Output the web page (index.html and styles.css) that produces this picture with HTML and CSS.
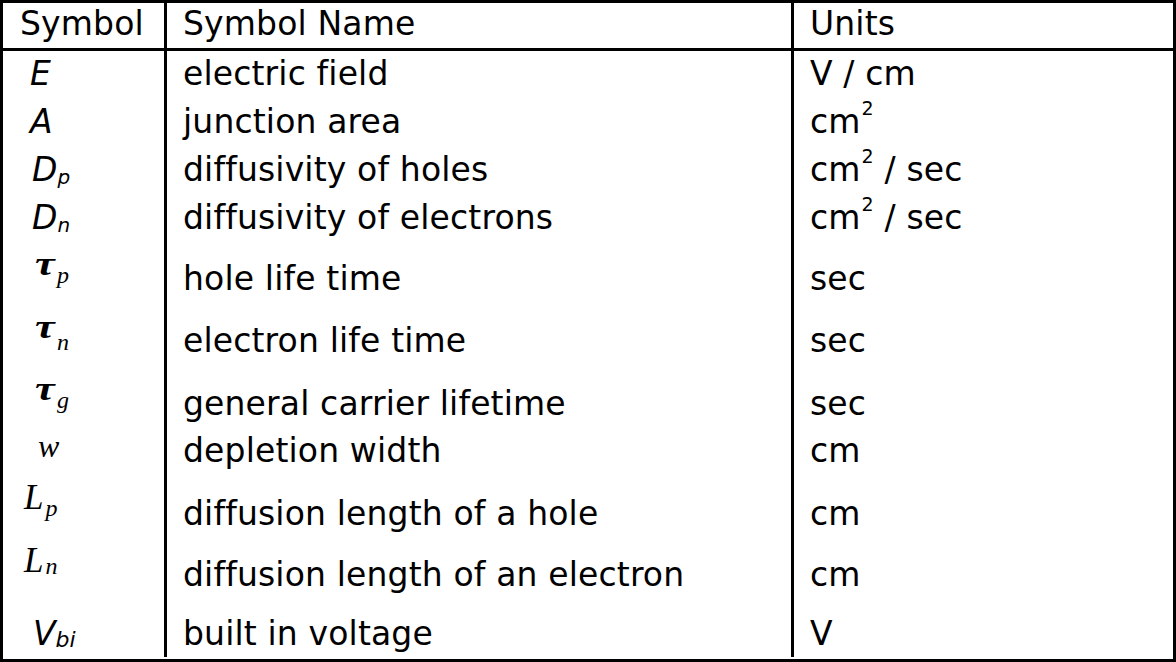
FILE: index.html
```html
<!DOCTYPE html>
<html lang="en">
<head>
<meta charset="utf-8">
<title>Symbols</title>
<link rel="stylesheet" href="styles.css">
</head>
<body>
<div class="sym-table">
  <div class="row head">
    <div class="cell c-sym">Symbol</div>
    <div class="cell c-name">Symbol Name</div>
    <div class="cell c-unit">Units</div>
  </div>
  <div class="row r-std">
    <div class="cell c-sym"><span class="sans ml-e">E</span></div>
    <div class="cell c-name">electric field</div>
    <div class="cell c-unit">V / cm</div>
  </div>
  <div class="row r-std">
    <div class="cell c-sym"><span class="sans ml-e">A</span></div>
    <div class="cell c-name">junction area</div>
    <div class="cell c-unit">cm<sup class="sq">2</sup></div>
  </div>
  <div class="row r-std">
    <div class="cell c-sym"><span class="sans ml-d">D<sub class="ssub">p</sub></span></div>
    <div class="cell c-name">diffusivity of holes</div>
    <div class="cell c-unit">cm<sup class="sq">2</sup> / sec</div>
  </div>
  <div class="row r-std">
    <div class="cell c-sym"><span class="sans ml-d">D<sub class="ssub">n</sub></span></div>
    <div class="cell c-name">diffusivity of electrons</div>
    <div class="cell c-unit">cm<sup class="sq">2</sup> / sec</div>
  </div>
  <div class="row r-tp">
    <div class="cell c-sym s-top3"><span class="serif ml-t"><span class="tau">τ</span><sub class="rsub d8">p</sub></span></div>
    <div class="cell c-name">hole life time</div>
    <div class="cell c-unit">sec</div>
  </div>
  <div class="row r-tn">
    <div class="cell c-sym s-top5"><span class="serif ml-t"><span class="tau">τ</span><sub class="rsub d12">n</sub></span></div>
    <div class="cell c-name">electron life time</div>
    <div class="cell c-unit">sec</div>
  </div>
  <div class="row r-tg">
    <div class="cell c-sym s-top5"><span class="serif ml-t"><span class="tau">τ</span><sub class="rsub d8">g</sub></span></div>
    <div class="cell c-name">general carrier lifetime</div>
    <div class="cell c-unit">sec</div>
  </div>
  <div class="row r-w">
    <div class="cell c-sym s-top0"><span class="serif ml-w">w</span></div>
    <div class="cell c-name">depletion width</div>
    <div class="cell c-unit">cm</div>
  </div>
  <div class="row r-lp">
    <div class="cell c-sym s-top4"><span class="serif big ml-l">L<sub class="rsub d7">p</sub></span></div>
    <div class="cell c-name">diffusion length of a hole</div>
    <div class="cell c-unit">cm</div>
  </div>
  <div class="row r-ln">
    <div class="cell c-sym s-top4"><span class="serif big ml-l">L<sub class="rsub d2">n</sub></span></div>
    <div class="cell c-name">diffusion length of an electron</div>
    <div class="cell c-unit">cm</div>
  </div>
  <div class="row r-vbi">
    <div class="cell c-sym"><span class="sans ml-v">V<sub class="ssub vb">bi</sub></span></div>
    <div class="cell c-name">built in voltage</div>
    <div class="cell c-unit">V</div>
  </div>
</div>
</body>
</html>
```
FILE: styles.css
```css
html, body {
  margin: 0;
  padding: 0;
  background: #ffffff;
}

.sym-table {
  box-sizing: border-box;
  width: 1176px;
  height: 662px;
  border: 3px solid #000;
  font-family: "DejaVu Sans", Verdana, sans-serif;
  font-size: 33px;
  letter-spacing: 0.15px;
  color: #000;
  line-height: 36px;
}

.row {
  display: grid;
  grid-template-columns: 164px 627px 1fr;
}

.cell {
  box-sizing: border-box;
  white-space: nowrap;
}

.c-sym, .c-name {
  border-right: 3px solid #000;
}

.c-sym { padding-left: 17px; }
.c-name { padding-left: 16px; }
.c-unit { padding-left: 16px; }

.head {
  height: 48px;
}
.head .cell {
  border-bottom: 3px solid #000;
  padding-top: 3px;
}

.r-std { height: 48px; }
.r-std .cell { padding-top: 5px; }

.r-tp { height: 61px; }
.r-tp .c-name, .r-tp .c-unit { padding-top: 18px; }

.r-tn { height: 62px; }
.r-tn .c-name, .r-tn .c-unit { padding-top: 19px; }

.r-tg { height: 62px; }
.r-tg .c-name, .r-tg .c-unit { padding-top: 20px; }

.r-w { height: 48px; }
.r-w .c-name, .r-w .c-unit { padding-top: 5px; }

.r-lp { height: 63px; }
.r-lp .c-name, .r-lp .c-unit { padding-top: 20px; }

.r-ln { height: 61px; }
.r-ln .c-name, .r-ln .c-unit { padding-top: 18px; }

.r-vbi { height: 57px; }
.r-vbi .cell { padding-top: 16px; }

.s-top0 { padding-top: 0; }
.s-top3 { padding-top: 3px; }
.s-top4 { padding-top: 4px; }
.s-top5 { padding-top: 5px; }

.sans {
  font-style: italic;
  letter-spacing: 0;
}
.serif {
  font-family: "Liberation Serif", "Times New Roman", serif;
  font-style: italic;
  font-size: 32px;
  letter-spacing: 0;
}
.serif.big {
  font-size: 35px;
}

.tau {
  display: inline-block;
  font-size: 34px;
  font-weight: bold;
  transform: scaleX(1.3);
  transform-origin: left bottom;
  margin-right: 5px;
}

.ml-e { margin-left: 10px; }
.ml-d { margin-left: 12px; }
.ml-v { margin-left: 13px; }
.ml-t { margin-left: 15px; }
.ml-w { margin-left: 18px; }
.ml-l { margin-left: 4px; }

.ssub {
  font-size: 20px;
  line-height: 0;
  vertical-align: -3px;
}
.ssub.vb {
  font-size: 22px;
  vertical-align: -2px;
}

.rsub {
  font-size: 24px;
  line-height: 0;
  margin-left: 2px;
}
.rsub.d2 { vertical-align: -2px; }
.rsub.d7 { vertical-align: -7px; }
.rsub.d8 { vertical-align: -8px; }
.rsub.d12 { vertical-align: -12px; }

.sq {
  font-size: 19px;
  line-height: 0;
  vertical-align: 18px;
  margin-left: 1px;
}
```
